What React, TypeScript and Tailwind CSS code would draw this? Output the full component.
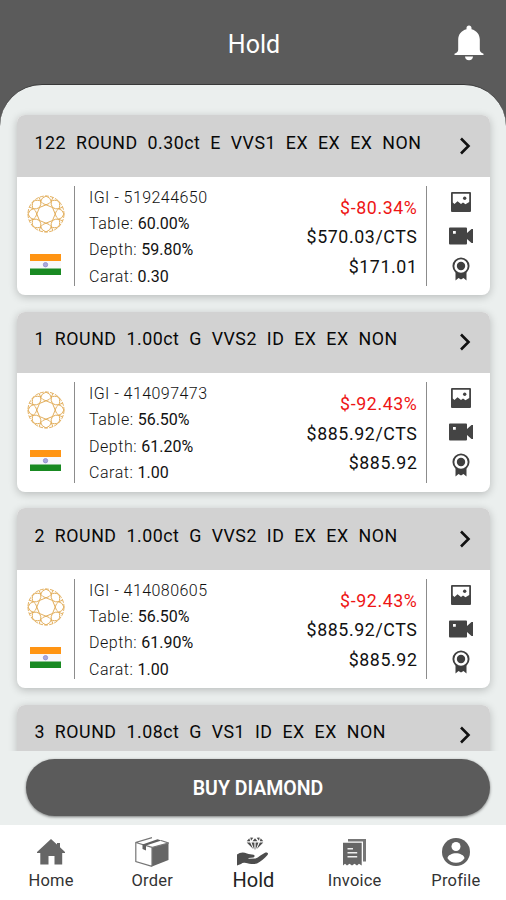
import React from 'react';

interface Specs {
  cert: string;
  table: string;
  depth: string;
  carat: string;
  discount: string;
  perCarat: string;
  total: string;
}

interface Diamond {
  title: string;
  specs?: Specs;
}

const DIAMONDS: Diamond[] = [
  {
    title: '122  ROUND  0.30ct  E  VVS1  EX  EX  EX  NON',
    specs: { cert: 'IGI - 519244650', table: '60.00%', depth: '59.80%', carat: '0.30', discount: '$-80.34%', perCarat: '$570.03/CTS', total: '$171.01' },
  },
  {
    title: '1  ROUND  1.00ct  G  VVS2  ID  EX  EX  NON',
    specs: { cert: 'IGI - 414097473', table: '56.50%', depth: '61.20%', carat: '1.00', discount: '$-92.43%', perCarat: '$885.92/CTS', total: '$885.92' },
  },
  {
    title: '2  ROUND  1.00ct  G  VVS2  ID  EX  EX  NON',
    specs: { cert: 'IGI - 414080605', table: '56.50%', depth: '61.90%', carat: '1.00', discount: '$-92.43%', perCarat: '$885.92/CTS', total: '$885.92' },
  },
  { title: '3  ROUND  1.08ct  G  VS1  ID  EX  EX  NON' },
];

function BellIcon() {
  return (
    <svg viewBox="0 0 30 36" className="w-[30px] h-9" fill="#fff">
      <path d="M15 .5c1.500 0 2.500 1 2.500 2.500v1.200c5 1.300 8.300 5 8.300 10.300v10c0 1.500.7 2.500 1.700 3.200l2 1V30H.5v-1.300l2-1c1-.7 1.700-1.700 1.700-3.200v-10c0-5.300 3.300-9 8.300-10.300V3C12.500 1.500 13.500.5 15 .5z" />
      <path d="M11 31.500h8c0 2.200-1.700 3.700-4 3.700s-4-1.500-4-3.700z" />
    </svg>
  );
}

function RoundCutIcon() {
  const angles = [0, 45, 90, 135, 180, 225, 270, 315];
  return (
    <svg viewBox="-19 -19 38 38" className="w-[38px] h-[38px]" fill="none" stroke="#e0a850" strokeWidth="0.900">
      <circle r="18" strokeDasharray="4 1.200" />
      {angles.map((a) => (
        <g key={a} transform={`rotate(${a})`}>
          <path d="M0-18Q5-16 5.200-12.600 3.500-10 0-9.200-3.500-10-5.200-12.600-5-16 0-18z" />
          <path d="M0-9.200L6.500-6.500" />
          <path d="M5.200-12.600L6.900-16.600" />
        </g>
      ))}
    </svg>
  );
}

function IndiaFlag() {
  return (
    <svg viewBox="0 0 31 21" className="w-[31px] h-[21px]">
      <rect width="31" height="21" fill="#f8f8fb" />
      <rect width="31" height="7" fill="#ff9413" />
      <rect y="14.500" width="31" height="6.500" fill="#198a22" />
      <circle cx="15.500" cy="10.700" r="2.200" fill="#aaa9dc" stroke="#8d8bcc" strokeWidth="0.800" />
    </svg>
  );
}

function PictureIcon() {
  return (
    <svg viewBox="0 0 20 20" className="w-5 h-5" fill="#444">
      <path fillRule="evenodd" d="M1 0h18q1 0 1 1v18q0 1-1 1H1q-1 0-1-1V1Q0 0 1 0zM1.800 1.800v8.700L3.500 12l3-2.800L10 12l2-1.500 2.500 1.700L18.200 10V1.800z" />
      <circle cx="13.700" cy="6.300" r="1.700" />
    </svg>
  );
}

function VideoIcon() {
  return (
    <svg viewBox="0 0 24 18" className="w-6 h-[18px]" fill="#444">
      <path fillRule="evenodd" d="M1 .5h16q1 0 1 1V6l4.500-4H24v14h-1.500L18 12v4.500q0 1-1 1H1q-1 0-1-1v-15q0-1 1-1zM4 4v2.800h2.800V4z" />
    </svg>
  );
}

function AwardIcon() {
  return (
    <svg viewBox="0 0 18 24" className="w-[18px] h-6" fill="#3f3f3f">
      <path d="M3.500 14h11v9.500L11.500 21 9 22.500 6.500 21l-3 2.500z" />
      <circle cx="9" cy="9" r="7.600" fill="#fff" stroke="#3f3f3f" strokeWidth="1.900" />
      <circle cx="9" cy="9" r="4.200" />
    </svg>
  );
}

function HomeIcon() {
  return (
    <svg viewBox="0 0 28 26" className="w-7 h-[26px]" fill="#666">
      <path d="M14 0l6 5.500V4h3v4.300L28 13v1h-2.800v11.500h-7.700V17h-6v8.500H3.300V14H0v-1z" />
    </svg>
  );
}

function BoxIcon() {
  return (
    <svg viewBox="0 0 34 30" className="w-[34px] h-[30px]">
      <path d="M17 10.500L33.500 6v17L17 29.500z" fill="#666" />
      <path d="M17 29.300L.8 24.500V5.500L17 .7M.8 5.500L17 10.300M17 29.300V10.500L33.300 6 26 3.500" fill="none" stroke="#777" strokeWidth="1.200" />
      <path d="M7.500 7.500L22.500 2.200l4 1.400L11 8.500v5l-3.500-1.400z" fill="#606060" />
    </svg>
  );
}

function HoldIcon() {
  return (
    <svg viewBox="0 0 32 30" className="w-8 h-[30px]" fill="#4d4d4d">
      <path d="M0 17.500c3-2.300 6.500-2.700 10-1 2 1 4.500.7 6.500 1.200 1.500.4 1.500 2.300 0 2.800l-5 .4v.8l7-.2c3-1 6-4 9.500-5.700 2-1 4 .5 2.500 2.300-3 3.400-6.500 6.500-10.500 8.500-2 1-9 .2-11-.5-2-.6-3.500-.5-5 .8L0 28.500z" />
      <path d="M13.300.5l3 .3-2.300 3zM19.700.8l3-.3-.7 3.300zM18 1.300l2.500 3h-5zM12.300 1.300l.9 3h-3.500zM23.700 1.300l2.600 3h-3.500z" />
      <path d="M9.700 5.500h3.500l3 6.500zM14.500 5.500h2.900v7.500zM18.600 5.500h2.900L18.600 13zM22.800 5.500h3.500L19.800 12z" />
    </svg>
  );
}

function InvoiceIcon() {
  return (
    <svg viewBox="0 0 23 27" className="w-[23px] h-[27px]">
      <path d="M5 0h18v22.500h-3V2.500H5z" fill="#777" />
      <path d="M0 3.800h18.700v22.700L16 24.800l-2 1.700-2.500-1.700L9 26.500l-2.500-1.700L4 26.500l-2-1.700-2 1.700z" fill="#666" />
      <path d="M4.500 9.700H10M4.500 13.700h9.700M4.500 17.700h9.700" stroke="#eee" strokeWidth="1.400" />
    </svg>
  );
}

function ProfileIcon() {
  return (
    <svg viewBox="0 0 28 28" className="w-7 h-7">
      <circle cx="14" cy="14" r="14" fill="#606060" />
      <circle cx="14" cy="8.500" r="4.500" fill="#fff" />
      <path d="M5.500 20.300c0-3 4.800-5 8.500-5s8.500 2 8.500 5A10.200 10.200 0 0 1 14 24.800a10.200 10.200 0 0 1-8.500-4.500z" fill="#fff" />
    </svg>
  );
}

function CardDetails({ specs }: { specs: Specs }) {
  const rows = [
    { label: 'Table:', value: specs.table },
    { label: 'Depth:', value: specs.depth },
    { label: 'Carat:', value: specs.carat },
  ];

  return (
    <div className="h-[118.500px] flex py-[9px]">
      <div className="w-[58.500px] border-r border-[#8c8c8c] flex flex-col items-center pt-[9px]">
        <div className="pl-0.5"><RoundCutIcon /></div>
        <div className="mt-[21px]"><IndiaFlag /></div>
      </div>
      <div className="flex-1 pl-[14px] -mt-px text-[16px] leading-[26.400px] text-[#111]">
        <p className="font-light tracking-[0.450px]">{specs.cert}</p>
        {rows.map((row) => (
          <p key={row.label} className="flex gap-1">
            <span className="font-light tracking-[0.550px]">{row.label}</span>
            <span>{row.value}</span>
          </p>
        ))}
      </div>
      <div className="w-[130px] pr-2 pt-[7px] text-right text-[17.800px] leading-[29.700px] tracking-[0.600px] text-[#111]">
        <p className="text-[#ee1515]">{specs.discount}</p>
        <p>{specs.perCarat}</p>
        <p>{specs.total}</p>
      </div>
      <div className="w-[64px] border-l border-[#8c8c8c] flex flex-col items-center pt-1.5 pl-[5px]">
        <PictureIcon />
        <div className="mt-[15px]"><VideoIcon /></div>
        <div className="mt-3"><AwardIcon /></div>
      </div>
    </div>
  );
}

function DiamondCard({ item }: { item: Diamond }) {
  return (
    <div className="h-[180px] shrink-0 rounded-lg bg-white overflow-hidden shadow-[0_2px_8px_rgba(0,0,0,0.22)]">
      <div className="h-[61.500px] bg-[#d2d2d2] flex items-center justify-between pl-[18px] pr-[19px]">
        <span className="whitespace-pre text-[17.800px] leading-5 tracking-[0.520px] text-[#080808] pb-1.5">{item.title}</span>
        <svg viewBox="0 0 12 18" className="w-3 h-[18px]" fill="none" stroke="#111" strokeWidth="2.600">
          <path d="M2 1.500L9.500 9 2 16.500" />
        </svg>
      </div>
      {item.specs && <CardDetails specs={item.specs} />}
    </div>
  );
}

export default function App() {
  const tabs = [
    { label: 'Home', icon: HomeIcon },
    { label: 'Order', icon: BoxIcon },
    { label: 'Hold', icon: HoldIcon, active: true },
    { label: 'Invoice', icon: InvoiceIcon },
    { label: 'Profile', icon: ProfileIcon },
  ];

  return (
    <div className="w-[506px] h-[900px] bg-[#5b5b5b] flex flex-col overflow-hidden font-[Roboto,sans-serif]">
      <header className="h-[84px] shrink-0 grid grid-cols-[1fr_auto_1fr] items-center px-[22px] pt-px">
        <span />
        <h1 className="text-[25px] text-white pt-1 pl-0.5">Hold</h1>
        <div className="justify-self-end"><BellIcon /></div>
      </header>

      <main className="flex-1 min-h-0 flex flex-col rounded-t-[42px] bg-[#ebefee] border-t border-[#383838] overflow-hidden">
        <div className="h-[666px] shrink-0 flex flex-col gap-[16.500px] px-[16.500px] pt-[30px] overflow-hidden">
          {DIAMONDS.map((item) => (
            <DiamondCard key={item.title} item={item} />
          ))}
        </div>
        <div className="pl-[26px] pr-4 pt-2">
          <button className="w-full h-[57px] pt-0.5 rounded-full bg-[#5b5b5b] text-white text-[19.500px] font-semibold shadow-[0_1px_3px_rgba(0,0,0,0.5)]">
            BUY DIAMOND
          </button>
        </div>
      </main>

      <nav className="h-[75px] shrink-0 bg-white grid grid-cols-5">
        {tabs.map((tab) => (
          <div key={tab.label} className="flex flex-col items-center pt-2.5">
            <div className="h-[34px] pl-px flex items-center justify-center"><tab.icon /></div>
            <span className={tab.active ? 'text-[20px] leading-[22px] text-[#222] pl-px' : 'text-[16.500px] leading-6 tracking-[0.200px] text-[#333] pl-px'}>
              {tab.label}
            </span>
          </div>
        ))}
      </nav>
    </div>
  );
}
